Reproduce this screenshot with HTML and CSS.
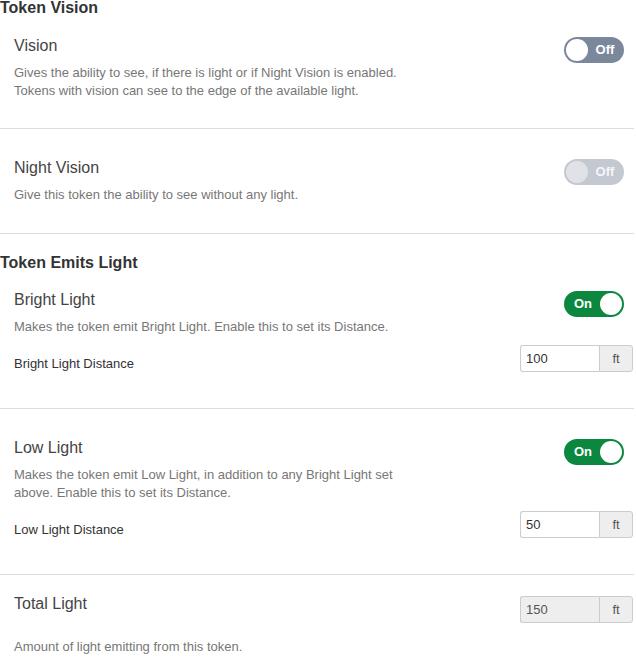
FILE: index.html
```html
<!DOCTYPE html>
<html>
<head>
<meta charset="utf-8">
<link rel="stylesheet" href="styles.css">
</head>
<body>
<div class="panel">
  <h3 class="title">Token Vision</h3>
  <div class="item item-first item-vision">
    <div class="row">
      <div class="label">Vision</div>
      <div class="toggle off"><span class="knob"></span><span class="txt">Off</span></div>
    </div>
    <p class="desc">Gives the ability to see, if there is light or if Night Vision is enabled. Tokens with vision can see to the edge of the available light.</p>
  </div>
  <div class="divider"></div>
  <div class="item">
    <div class="row">
      <div class="label">Night Vision</div>
      <div class="toggle off disabled"><span class="knob"></span><span class="txt">Off</span></div>
    </div>
    <p class="desc">Give this token the ability to see without any light.</p>
  </div>
  <div class="divider"></div>

  <h3 class="title title-second">Token Emits Light</h3>
  <div class="item item-bright item-input">
    <div class="row">
      <div class="label">Bright Light</div>
      <div class="toggle on"><span class="txt">On</span><span class="knob"></span></div>
    </div>
    <p class="desc">Makes the token emit Bright Light. Enable this to set its Distance.</p>
    <div class="field-row">
      <div class="field-label">Bright Light Distance</div>
      <div class="input-group"><div class="input">100</div><div class="addon">ft</div></div>
    </div>
  </div>
  <div class="divider"></div>
  <div class="item item-input">
    <div class="row">
      <div class="label">Low Light</div>
      <div class="toggle on"><span class="txt">On</span><span class="knob"></span></div>
    </div>
    <p class="desc">Makes the token emit Low Light, in addition to any Bright Light set above. Enable this to set its Distance.</p>
    <div class="field-row">
      <div class="field-label">Low Light Distance</div>
      <div class="input-group"><div class="input">50</div><div class="addon">ft</div></div>
    </div>
  </div>
  <div class="divider"></div>
  <div class="item item-total">
    <div class="row total-row">
      <div class="label">Total Light</div>
      <div class="input-group"><div class="input readonly">150</div><div class="addon">ft</div></div>
    </div>
    <p class="desc desc-total">Amount of light emitting from this token.</p>
  </div>
</div>
</body>
</html>
```

FILE: styles.css
```css
html, body {
  margin: 0;
  padding: 0;
  background: #ffffff;
}

body {
  font-family: "Liberation Sans", Arial, sans-serif;
  color: #333333;
}

.panel {
  width: 636px;
}

.title {
  margin: 0;
  font-size: 16px;
  line-height: 15px;
  font-weight: bold;
  color: #333333;
}

.title-second {
  margin-top: 21px;
}

.item {
  padding: 29px 3px 29px 14px;
}

.item-first {
  padding-top: 21px;
}

.item-vision {
  padding-bottom: 28px;
}

.item-bright {
  padding-top: 20px;
}

.item-input {
  padding-bottom: 35px;
}

.item-total {
  padding-top: 19px;
  padding-bottom: 0;
}

.row {
  display: flex;
  justify-content: space-between;
  align-items: flex-start;
}

.label {
  font-size: 16px;
  line-height: 20px;
  color: #444444;
}

.desc {
  margin: 1px 0 0 0;
  max-width: 400px;
  font-size: 13px;
  line-height: 18px;
  color: #777777;
}

.desc-total {
  margin-top: 15px;
}

.toggle {
  box-sizing: border-box;
  width: 60px;
  height: 26px;
  margin: 1px 9px 0 0;
  border-radius: 13px;
  padding: 2px;
  display: flex;
  align-items: center;
  font-size: 13px;
  font-weight: bold;
  color: #ffffff;
}

.toggle .knob {
  width: 22px;
  height: 22px;
  border-radius: 50%;
  background: #ffffff;
  flex: none;
}

.toggle .txt {
  flex: 1;
  text-align: center;
  line-height: 22px;
}

.toggle.off {
  background: #7b889b;
}

.toggle.off.disabled {
  background: #c4c8d0;
  color: #f5f6f8;
}

.toggle.off.disabled .knob {
  background: #e0e2e6;
}

.toggle.on {
  background: #0b8740;
}

.field-row {
  display: flex;
  justify-content: space-between;
  align-items: flex-start;
  margin-top: 9px;
}

.field-label {
  padding-top: 10px;
  font-size: 13px;
  line-height: 18px;
  color: #333333;
}

.input-group {
  display: flex;
  height: 27px;
  font-size: 13px;
}

.input {
  box-sizing: border-box;
  width: 79px;
  height: 27px;
  border: 1px solid #cccccc;
  border-right: none;
  border-radius: 3px 0 0 3px;
  padding: 0 5px;
  line-height: 25px;
  color: #333333;
  background: #ffffff;
}

.input.readonly {
  background: #eeeeee;
  color: #555555;
}

.addon {
  box-sizing: border-box;
  width: 34px;
  height: 27px;
  border: 1px solid #cccccc;
  border-radius: 0 3px 3px 0;
  background: #eeeeee;
  text-align: center;
  line-height: 25px;
  color: #555555;
}

.total-row .input-group {
  margin-top: 2px;
}

.divider {
  height: 1px;
  margin-right: 2px;
  background: #dddddd;
}
```
